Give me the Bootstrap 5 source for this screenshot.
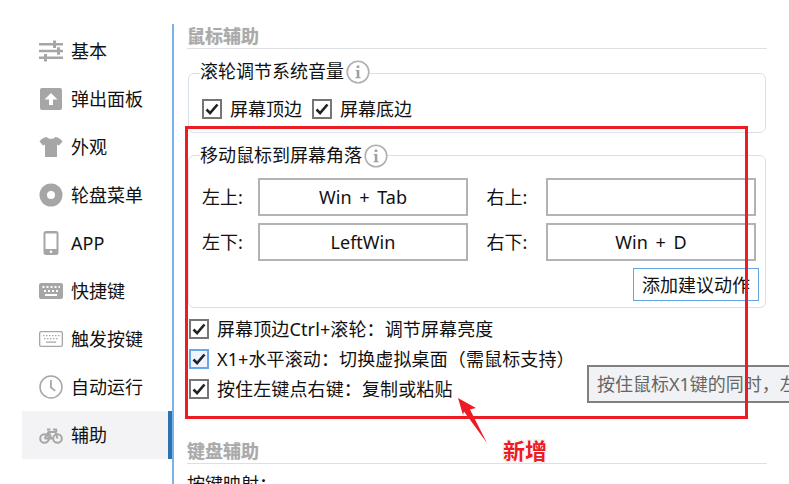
<!DOCTYPE html>
<html lang="zh-CN">
<head>
    <meta charset="UTF-8">
    <meta name="viewport" content="width=device-width, initial-scale=1.0">
    <title>辅助</title>
    <link href="https://cdn.jsdelivr.net/npm/bootstrap@5.3.0/dist/css/bootstrap.min.css" rel="stylesheet">
    <style>
        html, body { height: 100%; overflow: hidden; }
        body { position: relative; background: #fff; color: #111; font-family: "Noto Sans", "Noto Sans CJK SC", sans-serif; font-size: 18px; line-height: 24px; }
        .side-menu { width: 174px; height: 460px; margin-top: 24px; padding: 3px 0 0 22px; border-right: 2px solid #7ab2ea; flex-shrink: 0; }
        .side-link { height: 48px; padding-left: 17px; gap: 8px; color: #111; }
        .side-link svg { width: 24px; height: 24px; fill: #a6a6a6; flex-shrink: 0; }
        .side-link.on { background: #f3f3f5; box-shadow: inset -4px 0 0 #2f72b4; }
        .main-pane { width: 580px; margin-left: 13px; padding-top: 24px; flex-shrink: 0; }
        .sect-title { height: 25px; margin: 0; font-size: 18px; line-height: 24px; font-weight: 700; color: #aaa; text-shadow: 0 0 1px #ccc; border-bottom: 1px solid #dcdfe3; }
        .opt-box { margin: 9px 1px 0 1px; padding: 0 9px 11px 11px; border: 1px solid #d9e0e8; border-radius: 6px; }
        .opt-box legend { float: none; width: auto; margin: 0; padding: 0; font-size: 18px; line-height: 26px; }
        .box-one legend { padding-bottom: 4px; }
        .tip-icon { width: 24px; height: 24px; vertical-align: -6px; margin-left: 2px; }
        .box-two { padding-bottom: 6px; }
        .corner-row { height: 38px; margin-bottom: 7px; }
        .corner-row label { width: 58px; padding-left: 2px; flex-shrink: 0; }
        .corner-row .gap-lbl { width: 78px; padding-left: 0; text-align: center; }
        .key-field { width: 210px; height: 38px; flex-shrink: 0; border: 2px solid #b3b3b3; border-radius: 0; padding: 0; text-align: center; font-size: 18px; line-height: 34px; word-spacing: 3px; color: #111; }
        .key-field:focus { box-shadow: none; border-color: #b3b3b3; }
        .add-btn { width: 126px; height: 33px; margin: 0 -3px 0 auto; padding: 0; border: 1.5px solid #62a6e4; border-radius: 0; background: #fff; color: #111; font-size: 18px; line-height: 28px; white-space: nowrap; }
        .chk-line { height: 30px; margin-left: 2px; gap: 8px; letter-spacing: .12px; }
        .chk-box.form-check-input { width: 20px; height: 20px; margin: 0; flex-shrink: 0; border: 2px solid #767676; border-radius: 0; background-color: #fff; background-size: 16px 16px; opacity: 1;
            background-image: url("data:image/svg+xml,%3Csvg xmlns='http://www.w3.org/2000/svg' viewBox='0 0 16 16'%3E%3Cpath fill='none' stroke='%23222' stroke-width='2.6' d='M2.5 8.5l3.6 3.6 7.4-8.6'/%3E%3C/svg%3E"); }
        .chk-box.hot.form-check-input { border-color: #6aa6ea; background-color: #eef5fd; }
        .chk-box.form-check-input:focus { box-shadow: none; }
        .edge-row { padding: 9px 0 0 2px; gap: 8px; }
        .edge-row label { margin-right: 2px; }
        .box-two .corner-first { margin-top: 10px; }
        .chk-first { margin-top: 6px; }
        .sect-two { margin-top: 35px; }
        .map-line { margin-top: 8px; }
        .hover-tip { position: absolute; left: 587px; top: 365px; width: 240px; height: 38px; padding-left: 8px; background: #f1f2f5; border: 2px solid #808080; color: #666; line-height: 34px; white-space: nowrap; }
        .red-frame { position: absolute; left: 185px; top: 126px; width: 563px; height: 293px; border: 3px solid #ed1c24; pointer-events: none; }
        .red-arrow { position: absolute; left: 450px; top: 390px; width: 50px; height: 60px; fill: #ed1c24; }
        .red-note { position: absolute; left: 503px; top: 437px; font-size: 22px; line-height: 26px; font-weight: 700; color: #ed1c24; text-shadow: 1px 0 #fff, -1px 0 #fff, 0 1px #fff, 0 -1px #fff, 1px 1px #ddd, -1px -1px #ddd, 1px -1px #ddd, -1px 1px #ddd; }
    </style>
</head>
<body class="d-flex">
    <nav class="side-menu nav flex-column flex-nowrap">
        <a class="side-link d-flex align-items-center text-decoration-none" href="#">
            <svg viewBox="0 0 24 24"><path d="M0 4h24v2.6H0zM0 10.7h24v2.6H0zM0 17.4h24v2.6H0z"/><path d="M14 1.500h3v7.500h-3zM18 8.300h3v7.500h-3zM5 15h3v7.500H5z"/></svg>基本</a>
        <a class="side-link d-flex align-items-center text-decoration-none" href="#">
            <svg viewBox="0 0 24 24"><path fill-rule="evenodd" d="M3 1h18a2 2 0 0 1 2 2v18a2 2 0 0 1-2 2H3a2 2 0 0 1-2-2V3a2 2 0 0 1 2-2zm9 5l-6.500 6.500H10V18h4v-5.500h4.500z"/></svg>弹出面板</a>
        <a class="side-link d-flex align-items-center text-decoration-none" href="#">
            <svg viewBox="0 0 24 24"><path d="M7.500 2C9 3.300 10.300 3.800 12 3.800S15 3.300 16.500 2C19 2.500 22 4 23.500 6.500L20 10.500 18 9.500V22H6V9.500L4 10.500 .5 6.500C2 4 5 2.500 7.500 2z"/></svg>外观</a>
        <a class="side-link d-flex align-items-center text-decoration-none" href="#">
            <svg viewBox="0 0 24 24"><path fill-rule="evenodd" d="M12 .5a11.500 11.500 0 1 1 0 23 11.500 11.500 0 0 1 0-23zm0 7.500a4 4 0 1 0 0 8 4 4 0 0 0 0-8z"/></svg>轮盘菜单</a>
        <a class="side-link d-flex align-items-center text-decoration-none" href="#">
            <svg viewBox="0 0 24 24"><path fill-rule="evenodd" d="M7 0h10a2.500 2.500 0 0 1 2.500 2.500v19A2.500 2.500 0 0 1 17 24H7a2.500 2.500 0 0 1-2.500-2.500v-19A2.500 2.500 0 0 1 7 0zM6.500 2.500V18h11V2.500zM12 19.500a1.300 1.300 0 1 0 0 2.600 1.300 1.300 0 0 0 0-2.600z"/></svg>APP</a>
        <a class="side-link d-flex align-items-center text-decoration-none" href="#">
            <svg viewBox="0 0 24 24"><path fill-rule="evenodd" d="M2 4h20a2 2 0 0 1 2 2v12a2 2 0 0 1-2 2H2a2 2 0 0 1-2-2V6a2 2 0 0 1 2-2zm1.500 3v2h2V7zm4 0v2h2V7zm4 0v2h2V7zm4 0v2h2V7zm4 0v2h1.500V7zM5 11v2h2v-2zm4 0v2h2v-2zm4 0v2h2v-2zm4 0v2h2v-2zM6 15v2h12v-2z"/></svg>快捷键</a>
        <a class="side-link d-flex align-items-center text-decoration-none" href="#">
            <svg viewBox="0 0 24 24"><path fill-rule="evenodd" d="M2 4h20a2 2 0 0 1 2 2v12a2 2 0 0 1-2 2H2a2 2 0 0 1-2-2V6a2 2 0 0 1 2-2zm0 1.300a.8.8 0 0 0-.7.7v12a.8.8 0 0 0 .7.7h20a.8.8 0 0 0 .7-.7V6a.8.8 0 0 0-.7-.7z"/><path d="M4 8h1.500v1.300H4zm3 0h1.500v1.300H7zm3 0h1.500v1.300H10zm3 0h1.500v1.300H13zm3 0h1.500v1.300H16zm3 0h1.500v1.300H19zM5 11h1.500v1.300H5zm3 0h1.500v1.300H8zm3 0h1.500v1.300H11zm3 0h1.500v1.300H14zm3 0h1.500v1.300H17zM7 14.500h10v1.300H7z"/></svg>触发按键</a>
        <a class="side-link d-flex align-items-center text-decoration-none" href="#">
            <svg viewBox="0 0 24 24"><circle cx="12" cy="12" r="11" fill="none" stroke="#a6a6a6" stroke-width="1.500"/><path d="M11 5h1.800v7l4 3.200-1.100 1.300-4.700-3.700z"/></svg>自动运行</a>
        <a class="side-link on d-flex align-items-center text-decoration-none" href="#">
            <svg viewBox="0 0 24 24"><circle cx="5.500" cy="15.500" r="4.300" fill="none" stroke="#a6a6a6" stroke-width="2"/><circle cx="18.500" cy="15.500" r="4.300" fill="none" stroke="#a6a6a6" stroke-width="2"/><path fill="none" stroke="#a6a6a6" stroke-width="2" d="M5.500 15.500L9.500 9h7l2 6.500M9.500 9l3 6.500h-7M8 6.500h3.500M14 6.500h3l.5 2.500"/></svg>辅助</a>
    </nav>

    <main class="main-pane">
        <h6 class="sect-title">鼠标辅助</h6>

        <fieldset class="opt-box box-one">
            <legend>滚轮调节系统音量<svg class="tip-icon" viewBox="0 0 24 24"><circle cx="12" cy="12" r="10.800" fill="none" stroke="#b0b0b0" stroke-width="1.600"/><path fill="#a0a0a0" d="M10.700 5.500h2.600v2.600h-2.600zM9.800 10h3.500v7h1.200v1.300h-4.900V17h1.200v-5.700h-1z"/></svg></legend>
            <div class="d-flex align-items-center edge-row">
                <input class="chk-box form-check-input" type="checkbox" checked id="edgeTop">
                <label for="edgeTop">屏幕顶边</label>
                <input class="chk-box form-check-input" type="checkbox" checked id="edgeBottom">
                <label for="edgeBottom">屏幕底边</label>
            </div>
        </fieldset>

        <fieldset class="opt-box box-two">
            <legend>移动鼠标到屏幕角落<svg class="tip-icon" viewBox="0 0 24 24"><circle cx="12" cy="12" r="10.800" fill="none" stroke="#b0b0b0" stroke-width="1.600"/><path fill="#a0a0a0" d="M10.700 5.500h2.600v2.600h-2.600zM9.800 10h3.500v7h1.200v1.300h-4.900V17h1.200v-5.700h-1z"/></svg></legend>
            <div class="d-flex align-items-center corner-row corner-first">
                <label>左上:</label><input class="key-field form-control" value="Win + Tab">
                <label class="gap-lbl">右上:</label><input class="key-field form-control" value="">
            </div>
            <div class="d-flex align-items-center corner-row">
                <label>左下:</label><input class="key-field form-control" value="LeftWin">
                <label class="gap-lbl">右下:</label><input class="key-field form-control" value="Win + D">
            </div>
            <div class="d-flex">
                <button class="add-btn btn" type="button">添加建议动作</button>
            </div>
        </fieldset>

        <div class="d-flex align-items-center chk-line chk-first">
            <input class="chk-box form-check-input" type="checkbox" checked id="opt1">
            <label for="opt1">屏幕顶边Ctrl+滚轮：调节屏幕亮度</label>
        </div>
        <div class="d-flex align-items-center chk-line">
            <input class="chk-box hot form-check-input" type="checkbox" checked id="opt2">
            <label for="opt2">X1+水平滚动：切换虚拟桌面（需鼠标支持）</label>
        </div>
        <div class="d-flex align-items-center chk-line">
            <input class="chk-box form-check-input" type="checkbox" checked id="opt3">
            <label for="opt3">按住左键点右键：复制或粘贴</label>
        </div>

        <h6 class="sect-title sect-two">键盘辅助</h6>
        <div class="map-line">按键映射：</div>
    </main>

    <div class="hover-tip">按住鼠标X1键的同时，左</div>
    <div class="red-frame"></div>
    <svg class="red-arrow" viewBox="450 390 50 60"><path d="M458 398L476 408 470 409.500 487 443 464 411.500 463 415z"/></svg>
    <div class="red-note">新增</div>

    <script src="https://cdn.jsdelivr.net/npm/bootstrap@5.3.0/dist/js/bootstrap.bundle.min.js"></script>
</body>
</html>
